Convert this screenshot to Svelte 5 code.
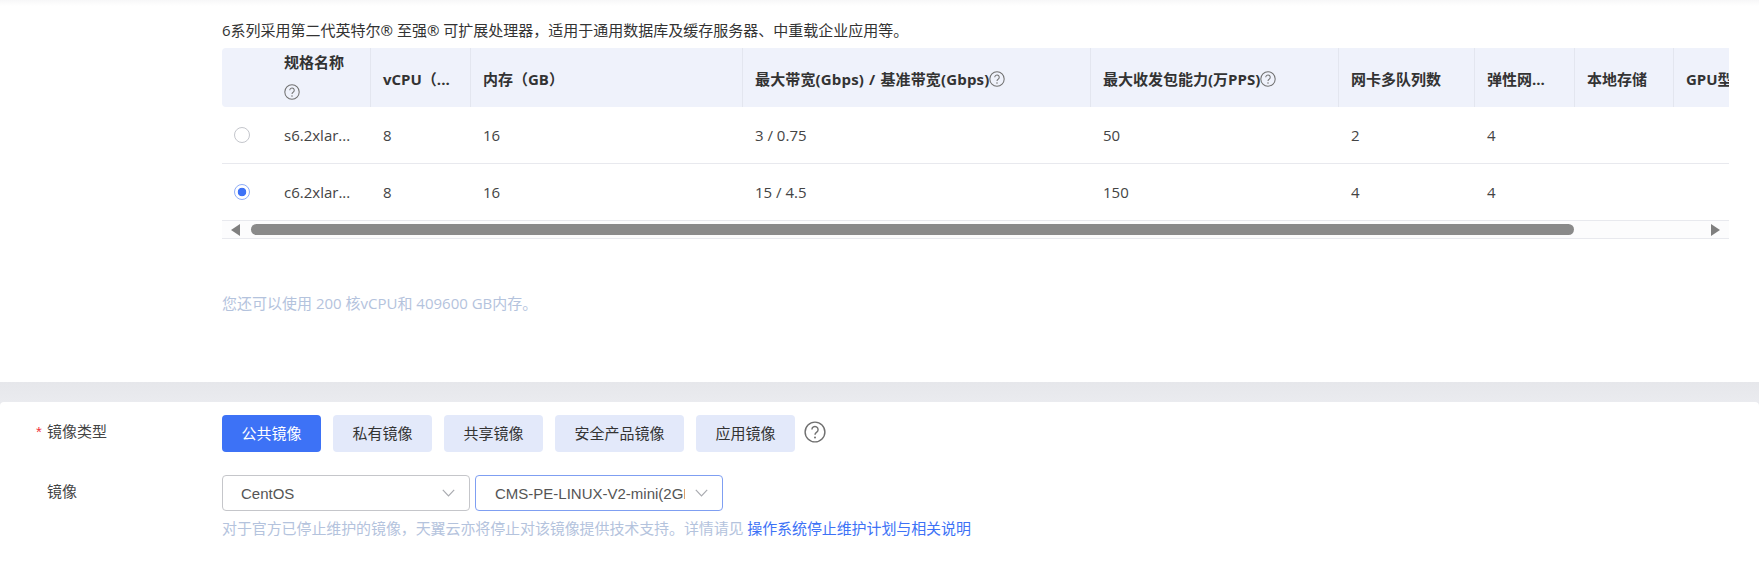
<script>
  const cols = [
    { label: '', w: 49 },
    { label: '规格名称', w: 99, help: 'below' },
    { label: 'vCPU（...', w: 100 },
    { label: '内存（GB）', w: 272 },
    { label: '最大带宽(Gbps) / 基准带宽(Gbps)', w: 348, help: 'inline', wide: true },
    { label: '最大收发包能力(万PPS)', w: 248, help: 'inline' },
    { label: '网卡多队列数', w: 136 },
    { label: '弹性网...', w: 100 },
    { label: '本地存储', w: 99 },
    { label: 'GPU型号', w: 100 }
  ];
  const rows = [
    { checked: false, cells: ['s6.2xlar...', '8', '16', '3 / 0.75', '50', '2', '4', '', ''] },
    { checked: true, cells: ['c6.2xlar...', '8', '16', '15 / 4.5', '150', '4', '4', '', ''] }
  ];
  const tabs = ['公共镜像', '私有镜像', '共享镜像', '安全产品镜像', '应用镜像'];
</script>

{#snippet help(size)}
  <svg class="help" width={size} height={size} viewBox="0 0 20 20" fill="none" stroke="#707070">
    <circle cx="10" cy="10" r="9" stroke-width="1.3" />
    <path d="M7.2 7.8a2.8 2.8 0 1 1 4.4 2.3c-1 .7-1.6 1.2-1.6 2.4" stroke-width="1.3" />
    <circle cx="10" cy="15" r=".9" fill="#707070" stroke="none" />
  </svg>
{/snippet}

{#snippet chevron()}
  <svg class="chev" width="13" height="8" viewBox="0 0 13 8" fill="none" stroke="#a9abb0" stroke-width="1.2">
    <path d="M.8.8l5.7 6 5.7-6" />
  </svg>
{/snippet}

<div class="page">
  <section class="upper">
    <p class="intro">6系列采用第二代英特尔® 至强® 可扩展处理器，适用于通用数据库及缓存服务器、中重载企业应用等。</p>
    <div class="tablewrap">
      <table>
        <colgroup>
          {#each cols as c}<col style="width:{c.w}px" />{/each}
        </colgroup>
        <thead>
          <tr>
            {#each cols as c, i}
              <th class:nodiv={i < 2} class:first={i === 0}>
                {#if c.help === 'below'}
                  <div class="stack"><span>{c.label}</span><i>{@render help(16)}</i></div>
                {:else if c.help === 'inline'}
                  <span class="inl" class:wide={c.wide}>{c.label}{@render help(16)}</span>
                {:else}
                  {c.label}
                {/if}
              </th>
            {/each}
          </tr>
        </thead>
        <tbody>
          {#each rows as r}
            <tr>
              <td class="radiocell"><span class="radio" class:on={r.checked}></span></td>
              {#each r.cells as cell}<td>{cell}</td>{/each}
            </tr>
          {/each}
        </tbody>
      </table>
      <div class="scrollbar">
        <span class="arrow left"></span>
        <span class="trackspace"><span class="thumb"></span></span>
        <span class="arrow right"></span>
      </div>
    </div>
    <p class="quota">您还可以使用 200 核vCPU和 409600 GB内存。</p>
  </section>

  <div class="divider"></div>

  <section class="lower">
    <div class="formrow firstrow">
      <div class="label"><span class="star">*</span>镜像类型</div>
      <div class="tabs">
        {#each tabs as t, i}
          <button class="tab" class:active={i === 0}>{t}</button>
        {/each}
        <span class="tabhelp">{@render help(22)}</span>
      </div>
    </div>
    <div class="formrow">
      <div class="label">镜像</div>
      <div class="field">
        <div class="selects">
          <div class="select os"><span class="val">CentOS</span>{@render chevron()}</div>
          <div class="select img"><span class="val">CMS-PE-LINUX-V2-mini(2GB)</span>{@render chevron()}</div>
        </div>
        <p class="hint">对于官方已停止维护的镜像，天翼云亦将停止对该镜像提供技术支持。详情请见 <a href="#top">操作系统停止维护计划与相关说明</a></p>
      </div>
    </div>
  </section>
</div>

<style>
  :global(body) { margin: 0; background: #fff; }
  .page {
    width: 1759px; height: 564px; overflow: hidden; background: #e9eaee;
    font-family: "Open Sans", "Noto Sans CJK SC", sans-serif;
    font-size: 15px; color: #333;
  }
  .upper {
    height: 382px; box-sizing: border-box; padding: 21px 30px 0 222px;
    background: linear-gradient(#f7f7f8, #fff 6px);
  }
  p { margin: 0; }
  .intro { height: 27px; line-height: 18px; color: #333; white-space: nowrap; }
  .tablewrap { width: 1507px; overflow: hidden; }
  table { table-layout: fixed; border-collapse: separate; border-spacing: 0; width: 1551px; }
  th {
    height: 59px; box-sizing: border-box; padding: 2px 0 0 12px; background: #eff2fb;
    border-left: 1px solid #e3e6ef; text-align: left; font-size: 15px; font-weight: 700;
    color: #333; white-space: nowrap; overflow: hidden;
  }
  th.nodiv { border-left: 0; padding-left: 13px; }
  th.first { border-radius: 4px 0 0 4px; }
  .stack { display: flex; flex-direction: column; align-items: flex-start; margin-top: -4px; }
  .stack span { line-height: 30px; }
  .stack i { height: 29px; display: flex; align-items: center; }
  .inl { display: inline-flex; align-items: center; }
  .inl.wide { word-spacing: 1px; letter-spacing: 0.15px; }
  .help { display: block; flex: none; }
  td {
    height: 57px; box-sizing: border-box; padding: 0 0 0 13px; border-bottom: 1px solid #e8e9ee;
    font-size: 15px; color: #444; white-space: nowrap; overflow: hidden;
  }
  .radiocell { padding-left: 12px; }
  .radio {
    display: block; width: 16px; height: 16px; box-sizing: border-box; border-radius: 50%;
    border: 1px solid #c4c6cc; background: #fff;
  }
  .radio.on { border: 1.5px solid #8fadf8; background: radial-gradient(circle, #3d72f6 0 4px, #fff 4.6px); }
  .scrollbar {
    display: flex; align-items: center; height: 17px; background: #fcfcfd;
    border-bottom: 1px solid #e8e9ee;
  }
  .trackspace { flex: 1; height: 11px; padding-left: 11px; padding-right: 137px; }
  .thumb { display: block; width: 100%; height: 11px; border-radius: 6px; background: #8a8a8a; }
  .arrow { width: 0; height: 0; border-top: 6px solid transparent; border-bottom: 6px solid transparent; flex: none; }
  .arrow.left { border-right: 9px solid #7f7f7f; margin-left: 9px; }
  .arrow.right { border-left: 9px solid #7f7f7f; margin-right: 9px; }
  .quota { margin-top: 55px; line-height: 18px; color: #b4c3dd; }
  .divider { height: 20px; background: linear-gradient(#e6e7eb, #eaebef); }
  .lower { background: #fff; height: 162px; border-radius: 4px 4px 0 0; }
  .formrow { display: flex; }
  .firstrow { padding-top: 13px; height: 73px; box-sizing: border-box; }
  .label { width: 222px; flex: none; box-sizing: border-box; padding-left: 47px; position: relative; line-height: 32px; color: #444; }
  .star { position: absolute; left: 36px; top: 1px; color: #f0323c; font-family: "Liberation Sans", sans-serif; }
  .tabs { display: flex; gap: 12px; align-items: center; height: 37px; }
  .tab {
    all: unset; height: 37px; box-sizing: border-box; padding: 0 19.5px; background: #e3e9fa; border-radius: 4px;
    font-size: 15px; color: #333; line-height: 37px;
  }
  .tab.active { background: #3d72f6; color: #fff; }
  .tabhelp { display: block; margin-left: -3px; margin-top: -4px; }
  .selects { display: flex; gap: 5px; }
  .select {
    height: 36px; box-sizing: border-box; border: 1px solid #c5c6ca; border-radius: 4px; display: flex; align-items: center;
    padding: 0 14px 0 18px; font-family: "Liberation Sans", sans-serif; font-size: 15px; color: #555;
  }
  .os { width: 248px; }
  .img { width: 248px; border-color: #7f9ff2; padding-left: 19px; }
  .val { flex: 1; overflow: hidden; white-space: nowrap; }
  .img .val { margin-right: 10px; }
  .chev { flex: none; }
  .hint { margin-top: 8px; line-height: 18px; color: #b4c3dd; white-space: nowrap; letter-spacing: -0.1px; }
  .hint a { color: #3d72f6; text-decoration: none; }
</style>
